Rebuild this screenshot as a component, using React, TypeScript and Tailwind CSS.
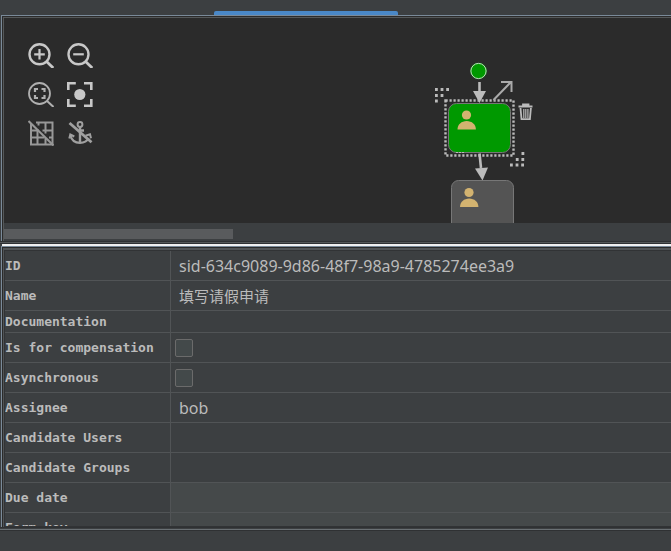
import { useState } from 'react';
import type { ReactNode } from 'react';

type Field = {
  id: string;
  label: string;
  kind: 'text' | 'checkbox';
  value?: string;
  cjk?: boolean;
  short?: boolean;
  shaded?: boolean;
};

const FIELDS: Field[] = [
  { id: 'id', label: 'ID', kind: 'text', value: 'sid-634c9089-9d86-48f7-98a9-4785274ee3a9' },
  { id: 'name', label: 'Name', kind: 'text', value: '填写请假申请', cjk: true },
  { id: 'documentation', label: 'Documentation', kind: 'text', short: true },
  { id: 'compensation', label: 'Is for compensation', kind: 'checkbox' },
  { id: 'async', label: 'Asynchronous', kind: 'checkbox' },
  { id: 'assignee', label: 'Assignee', kind: 'text', value: 'bob' },
  { id: 'users', label: 'Candidate Users', kind: 'text' },
  { id: 'groups', label: 'Candidate Groups', kind: 'text' },
  { id: 'due', label: 'Due date', kind: 'text', shaded: true },
  { id: 'form', label: 'Form key', kind: 'text', shaded: true },
];

function ToolButton({ label, children }: { label: string; children: ReactNode }) {
  return (
    <button type="button" aria-label={label} className="block size-[26px] text-[#c8c8c8]">
      <svg viewBox="0 0 26 26" className="size-full" fill="none" stroke="currentColor" strokeWidth="2">
        {children}
      </svg>
    </button>
  );
}

function Toolbar() {
  return (
    <div className="grid w-fit grid-cols-2 gap-[13px] pt-6 pl-6">
      <ToolButton label="Zoom in">
        <circle cx="11.5" cy="12.3" r="10" strokeWidth="2.4" />
        <path d="M18.5 19.5 25.3 26" strokeWidth="2.8" />
        <path d="M11.5 7v10.6M6.200 12.300h10.600" strokeWidth="2.2" />
      </ToolButton>
      <ToolButton label="Zoom out">
        <circle cx="11.5" cy="12.3" r="10" strokeWidth="2.4" />
        <path d="M18.5 19.5 25.3 26" strokeWidth="2.8" />
        <path d="M6.200 12.300h10.600" strokeWidth="2.2" />
      </ToolButton>
      <ToolButton label="Fit to view">
        <g stroke="#b0b0b0">
          <circle cx="11.5" cy="12.5" r="10.5" strokeWidth="1.8" />
          <path d="M18.800 19.800 25.500 26" />
          <path d="M7 11V8h3M13.500 8h3v3M16.500 14v3h-3M10 17H7v-3" strokeWidth="2.200" />
        </g>
      </ToolButton>
      <ToolButton label="Actual size">
        <path d="M1.300 9V2.300h7.500M17 2.300h7.300V9M24.300 18v6.700H17M8.800 24.700H1.300V18" strokeWidth="2.600" />
        <circle cx="12.800" cy="13.500" r="5.600" fill="currentColor" stroke="none" />
      </ToolButton>
      <ToolButton label="Toggle grid">
        <g stroke="#989898">
          <path d="M3 4v20.500h21.500V2.500H8M3 10.500h6M14.500 10.500h10M3 17.500h13M21 17.500h3.500M9.500 9v15.500M10.500 2.500v3M17.500 18v6.500M17.500 2.500v11" />
          <path d="M.5 1 25.500 25.500" />
        </g>
      </ToolButton>
      <ToolButton label="Toggle anchors">
        <g stroke="#a0a0a0">
          <circle cx="13" cy="4.500" r="2.400" />
          <path d="M13 7v15.500M12 10.500h5" strokeWidth="2.400" />
          <path d="M3.500 15.500c1 4.500 4.500 7.300 9.500 7.300 4 0 7-1.500 8.500-4.500" strokeWidth="2.200" />
          <path d="M2.300 18.500 3.300 14.500l4 2M18.500 15.800l4.500-1.500 1 4" />
          <path d="M2.500 3 24.500 22.300" strokeWidth="2.800" />
        </g>
      </ToolButton>
    </div>
  );
}

function PersonIcon({ x, y }: { x: number; y: number }) {
  return (
    <g fill="#d3b370" transform={`translate(${x} ${y})`}>
      <circle cx="9" cy="5" r="4.600" />
      <path d="M0 19.500c0-5 4-8.500 9.200-8.500s9.200 3.500 9.200 8.500z" />
    </g>
  );
}

function Diagram() {
  return (
    <svg
      className="absolute top-0 left-[426px]"
      width="120"
      height="205"
      viewBox="430 18 120 205"
      fill="none"
      role="img"
      aria-label="Process diagram"
    >
      <circle cx="478.500" cy="71" r="8.300" fill="#009900" />
      <circle cx="478.500" cy="71" r="7.600" stroke="#c4d8c4" strokeWidth="1" />

      <path d="M479.500 82v10" stroke="#bbbbbb" strokeWidth="2.600" />
      <path d="M473 91h13l-6.500 12z" fill="#bbbbbb" />

      <rect x="448.500" y="103.500" width="62" height="49" rx="8" fill="#009900" stroke="#777777" />
      <PersonIcon x={457.500} y={110} />
      <rect
        x="445.500"
        y="100.500"
        width="68"
        height="55"
        stroke="#bbbbbb"
        strokeWidth="2.400"
        strokeDasharray="2.200 1.800"
      />
      <path d="M456 152.500h9" stroke="#bbbbbb" strokeDasharray="2 1" />

      <path d="M479.500 153.500 481 168" stroke="#bbbbbb" strokeWidth="2.600" />
      <path d="M475 168.500l13-1-5.500 13z" fill="#bbbbbb" />

      <rect x="451.500" y="180.500" width="62" height="60" rx="7" fill="#545454" stroke="#777777" />
      <PersonIcon x={460} y={187.500} />

      {/* resize handles */}
      <path
        d="M435 89.500h14M435 95.500h10M435 101h3"
        stroke="#bbbbbb"
        strokeWidth="2.800"
        strokeDasharray="2.800 2.800"
      />
      <path
        d="M521.500 153.500h3M515.800 159.500h9M510 165h14"
        stroke="#bbbbbb"
        strokeWidth="2.800"
        strokeDasharray="2.800 2.800"
      />

      <path d="M493.500 100 511 82M501 82h10.500v10" stroke="#aaaaaa" strokeWidth="2" />

      {/* delete */}
      <g stroke="#bbbbbb" strokeWidth="1.800">
        <path d="M518.500 106.500h14M523 106v-1.500h5.500v1.500" />
        <path d="M520.500 108l1 11.200h8.400l1-11.200" />
        <path d="M523.800 109v9M525.800 109v9M527.900 109v9" strokeWidth="1.200" />
      </g>
    </svg>
  );
}

function PropertyRow({ field }: { field: Field }) {
  const [value, setValue] = useState(field.value ?? '');
  const [checked, setChecked] = useState(false);

  return (
    <tr className={field.short ? 'h-[22px]' : 'h-[30px]'}>
      <th scope="row" className="border-r border-b border-[#515456] p-0 text-left align-middle">
        <label
          htmlFor={field.id}
          className="block font-['DejaVu_Sans_Mono',monospace] text-[13px] leading-5 font-bold whitespace-nowrap"
        >
          {field.label}
        </label>
      </th>
      <td className={`border-b border-[#515456] p-0 align-middle ${field.shaded ? 'bg-[#45494a]' : ''}`}>
        {field.kind === 'checkbox' ? (
          <input
            id={field.id}
            type="checkbox"
            checked={checked}
            onChange={(e) => setChecked(e.target.checked)}
            className="ml-1 block size-[18px] appearance-none rounded-xs border border-[#6b6b6b] bg-[#43494a] checked:bg-[#4a88c7]"
          />
        ) : (
          <input
            id={field.id}
            type="text"
            value={value}
            onChange={(e) => setValue(e.target.value)}
            className={`block h-5 w-full bg-transparent pl-2 font-['Noto_Sans','Noto_Sans_CJK_SC',sans-serif] leading-5 outline-none ${
              field.cjk ? 'text-[15px]' : 'text-[16px]'
            }`}
          />
        )}
      </td>
    </tr>
  );
}

export default function App() {
  return (
    <div className="flex h-screen flex-col bg-[#3c3f41] text-[#bbbbbb]">
      <header className="flex h-[15px] shrink-0 items-end pl-[214px]">
        <div className="h-1 w-46 rounded-t-xs bg-[#4a88c7]" />
      </header>

      <section className="ml-px shrink-0 border-t border-l border-[#7a8a99]">
        <div className="border-t border-l border-[#2b2b2b]">
          <div className="border-t border-l border-[#555859]">
            <div className="relative h-[205px] overflow-hidden bg-[#2b2b2b]">
              <Toolbar />
              <Diagram />
            </div>
            <div className="h-[18px] pt-1.5">
              <div className="h-2.5 w-[34.4%] bg-[#595b5d]" />
            </div>
          </div>
        </div>
      </section>
      <div className="h-[3px] shrink-0 border-y border-[#2f3133] bg-[#555859]" />
      <div className="ml-0.5 h-0.5 shrink-0 bg-[#f0f0f0]" />

      <section className="ml-px flex min-h-0 flex-1 flex-col border-t border-l border-[#7a8a99]">
        <div className="flex min-h-0 flex-1 flex-col border-t border-l border-[#2b2b2b]">
          <div className="flex min-h-0 flex-1 flex-col border-t-2 border-l border-[#515456]">
            <div className="min-h-0 flex-1 overflow-hidden border-y border-l border-[#313335]">
              <table className="w-full table-fixed border-separate border-spacing-0">
                <colgroup>
                  <col className="w-[166px]" />
                  <col />
                </colgroup>
                <tbody>
                  {FIELDS.map((field) => (
                    <PropertyRow key={field.id} field={field} />
                  ))}
                </tbody>
              </table>
            </div>
          </div>
        </div>
      </section>
      <footer className="h-6 shrink-0 border-t border-[#2f3133]">
        <div className="mt-px h-0.5 border-t border-b border-t-[#6a7074] border-b-[#2f3133]" />
      </footer>
    </div>
  );
}
